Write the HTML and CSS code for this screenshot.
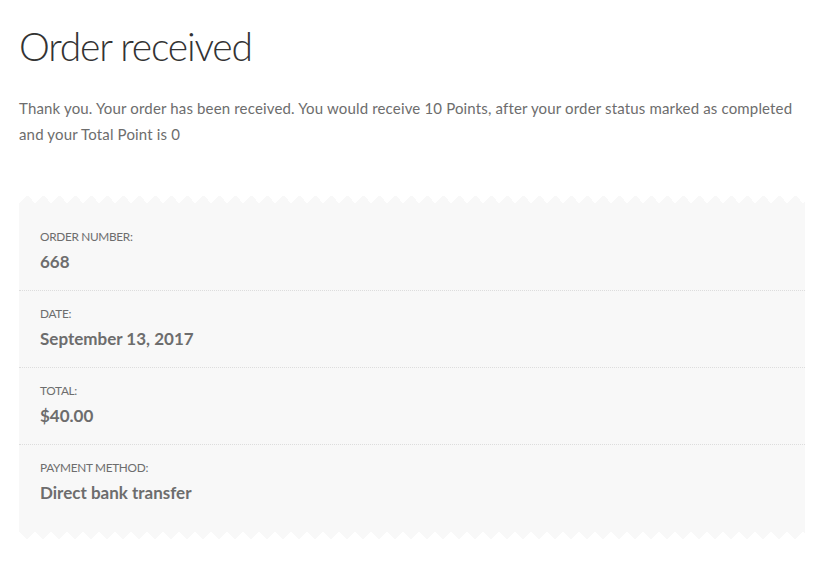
FILE: index.html
```html
<!DOCTYPE html>
<html lang="en">
<head>
<meta charset="utf-8">
<title>Order received</title>
<link rel="stylesheet" href="styles.css">
</head>
<body>
<main class="page">
  <h1 class="title">Order received</h1>
  <p class="notice">Thank you. Your order has been received. You would receive 10 Points, after your order status marked as completed and your Total Point is 0</p>
  <div class="receipt">
    <ul class="details">
      <li class="row"><span class="label">Order number:</span><strong class="value">668</strong></li>
      <li class="row"><span class="label">Date:</span><strong class="value">September 13, 2017</strong></li>
      <li class="row"><span class="label">Total:</span><strong class="value">$40.00</strong></li>
      <li class="row"><span class="label">Payment method:</span><strong class="value">Direct bank transfer</strong></li>
    </ul>
  </div>
</main>
</body>
</html>
```

FILE: styles.css
```css
html, body {
  margin: 0;
  padding: 0;
  background: #ffffff;
}

body {
  font-family: "Lato", "Open Sans", sans-serif;
  color: #6d6d6d;
  font-size: 15px;
  line-height: 26px;
}

.page {
  width: 786px;
  padding: 0 24px 0 19px;
}

.title {
  margin: 21px 0 0 0;
  font-size: 39px;
  line-height: 51px;
  font-weight: 300;
  letter-spacing: -1.2px;
  color: #333333;
}

.notice {
  margin: 23px 0 0 0;
  font-size: 15px;
  line-height: 26px;
  letter-spacing: 0.16px;
}

.receipt {
  margin-top: 48px;
}

.receipt::before,
.receipt::after {
  content: "";
  display: block;
  height: 8px;
  background-size: 16px 8px;
  background-repeat: repeat-x;
}

.receipt::before {
  background-image: conic-gradient(from 135deg at 50% 0, #f8f8f8 90deg, transparent 0);
}

.receipt::after {
  background-image: conic-gradient(from -45deg at 50% 100%, #f8f8f8 90deg, transparent 0);
}

.details {
  list-style: none;
  margin: 0;
  padding: 11px 0 10px 0;
  background: #f8f8f8;
}

.row {
  display: flex;
  flex-direction: column;
  padding: 13px 21px 15px 21px;
  border-bottom: 1px dotted #dddddd;
}

.row:last-child {
  border-bottom: 0;
}

.label {
  margin-bottom: 2px;
  font-size: 11.8px;
  line-height: 20px;
  letter-spacing: -0.3px;
  text-transform: uppercase;
}

.value {
  font-size: 17px;
  line-height: 26px;
  font-weight: 700;
}
```
